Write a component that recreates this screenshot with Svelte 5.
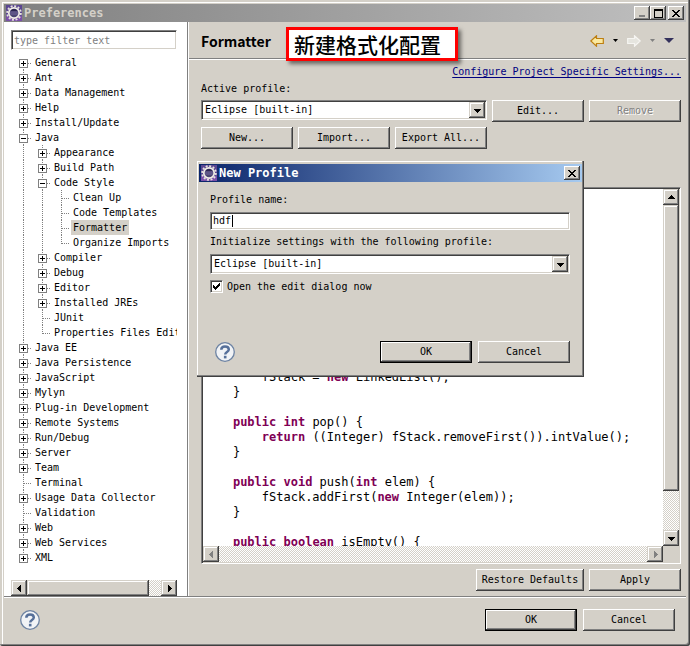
<script>
  const source = [
    ['General', 0, '+'], ['Ant', 0, '+'], ['Data Management', 0, '+'], ['Help', 0, '+'],
    ['Install/Update', 0, '+'], ['Java', 0, '-'],
    ['Appearance', 1, '+'], ['Build Path', 1, '+'], ['Code Style', 1, '-'],
    ['Clean Up', 2, ''], ['Code Templates', 2, ''], ['Formatter', 2, ''], ['Organize Imports', 2, ''],
    ['Compiler', 1, '+'], ['Debug', 1, '+'], ['Editor', 1, '+'], ['Installed JREs', 1, '+'],
    ['JUnit', 1, ''], ['Properties Files Editor', 1, ''],
    ['Java EE', 0, '+'], ['Java Persistence', 0, '+'], ['JavaScript', 0, '+'], ['Mylyn', 0, '+'],
    ['Plug-in Development', 0, '+'], ['Remote Systems', 0, '+'], ['Run/Debug', 0, '+'],
    ['Server', 0, '+'], ['Team', 0, '+'], ['Terminal', 0, ''], ['Usage Data Collector', 0, '+'],
    ['Validation', 0, ''], ['Web', 0, '+'], ['Web Services', 0, '+'], ['XML', 0, '+']
  ];

  // A guide line runs on below a row while a later sibling exists at that level.
  function continues(i, level) {
    for (let j = i + 1; j < source.length; j++) {
      if (source[j][1] < level) return false;
      if (source[j][1] === level) return true;
    }
    return false;
  }

  const rows = source.map(([label, depth, mark], i) => {
    const guides = [];
    for (let level = 0; level <= depth; level++) {
      const down = continues(i, level);
      if (level < depth && !down) continue;
      const top = level === 0 && i === 0 ? 8 : 0;
      guides.push({ x: 12.5 + level * 19, top, bottom: down ? 15 : 9 });
    }
    return { label, depth, mark, guides, cx: 12.5 + depth * 19, width: 22 + depth * 19 };
  });

  const code = [
    [['        fStack = '], ['new', 1], [' LinkedList();']],
    [['    }']],
    [[' ']],
    [['    '], ['public int', 1], [' pop() {']],
    [['        '], ['return', 1], [' ((Integer) fStack.removeFirst()).intValue();']],
    [['    }']],
    [[' ']],
    [['    '], ['public void', 1], [' push('], ['int', 1], [' elem) {']],
    [['        fStack.addFirst('], ['new', 1], [' Integer(elem));']],
    [['    }']],
    [[' ']],
    [['    '], ['public boolean', 1], [' isEmpty() {']]
  ];

  let selected = $state('Formatter');
  let name = $state('hdf');
  let openEdit = $state(true);
</script>

{#snippet gear()}
  <svg class="gear" width="16" height="16" viewBox="0 0 16 16" aria-hidden="true">
    <rect width="16" height="16" fill="#5b4691" />
    <rect y="11" width="16" height="5" fill="#7a4fa8" />
    <circle cx="8" cy="8" r="6.9" fill="none" stroke="#e6e3dc" stroke-width="1.8" stroke-dasharray="2 1.61" />
    <circle cx="8" cy="8" r="5.2" fill="#4a4470" stroke="#f2efe8" stroke-width="1.7" />
    <path d="M4 6.5a4.4 4.4 0 0 1 8 0z" fill="#2b2450" />
    <path d="M4 7h8M4 9h8" stroke="#75689f" />
  </svg>
{/snippet}

{#snippet arrow(dir)}
  <svg width="7" height="7" viewBox="0 0 7 7" aria-hidden="true" shape-rendering="crispEdges">
    {#if dir === 'down'}<path d="M0 2h7v1H6v1H5v1H4v1H3V5H2V4H1V3H0z" fill="currentColor" />
    {:else if dir === 'up'}<path d="M3 1h1v1h1v1h1v1h1v1H0V4h1V3h1V2h1z" fill="currentColor" />
    {:else if dir === 'left'}<path d="M5 0v7H4V6H3V5H2V4H1V3h1V2h1V1h1V0z" fill="currentColor" />
    {:else}<path d="M2 0v7h1V6h1V5h1V4h1V3H5V2H4V1H3V0z" fill="currentColor" />{/if}
  </svg>
{/snippet}

{#snippet cross()}
  <svg width="8" height="7" viewBox="0 0 8 7" aria-hidden="true" shape-rendering="crispEdges">
    <path d="M0 0h2v1h1v1h2V1h1V0h2v1H7v1H6v1H5v1h1v1h1v1h1v1H6V6H5V5H3v1H2v1H0V6h1V5h1V4h1V3H2V2H1V1H0z" />
  </svg>
{/snippet}

{#snippet help()}
  <button type="button" class="help" aria-label="Help">
    <svg width="20" height="20" viewBox="0 0 20 20" aria-hidden="true">
      <circle cx="10" cy="10" r="9.3" fill="#f1f3f6" stroke="#6d83a3" stroke-width="1.3" />
      <path d="M6.3 7.7C6.3 5.5 7.8 4.4 10 4.4s3.8 1.2 3.8 3.1c0 2.5-3.6 2.6-3.6 5" fill="none" stroke="#56709a" stroke-width="2.5" />
      <rect x="8.9" y="13.8" width="2.6" height="2.6" fill="#56709a" />
    </svg>
  </button>
{/snippet}

<div class="window">
  <header class="titlebar">
    {@render gear()}
    <h1>Preferences</h1>
    <div class="sys">
      <button aria-label="Minimize"><svg width="8" height="8" aria-hidden="true"><path d="M1 6h6v2H1z" fill="#808080" /></svg></button>
      <button aria-label="Maximize"><svg width="9" height="9" aria-hidden="true"><path d="M0 0h9v9H0zM1 2v6h7V2z" fill-rule="evenodd" /></svg></button>
      <button class="apart" aria-label="Close">{@render cross()}</button>
    </div>
  </header>

  <div class="body">
    <nav class="side">
      <input class="sunken filter" type="text" placeholder="type filter text" aria-label="Filter" />
      <ul class="tree">
        {#each rows as row}
          <li>
            <button class="row" onclick={() => (selected = row.label)}>
              <svg width={row.width} height="15" shape-rendering="crispEdges" aria-hidden="true">
                <g stroke="#808080" stroke-dasharray="1 1">
                  {#each row.guides as g}<path d="M{g.x} {g.top}V{g.bottom}" />{/each}
                  <path d="M{row.cx} 8.5H{row.width - 2}" />
                </g>
                {#if row.mark}
                  <rect x={row.cx - 4} y="4.5" width="8" height="8" fill="#fff" stroke="#808080" />
                  <path d="M{row.cx - 2.5} 8.5h5" stroke="#000" />
                  {#if row.mark === '+'}<path d="M{row.cx} 6v5" stroke="#000" />{/if}
                {/if}
              </svg>
              <span class:selected={row.label === selected}>{row.label}</span>
            </button>
          </li>
        {/each}
      </ul>
      <div class="scroll">
        <button aria-label="Scroll left">{@render arrow('left')}</button>
        <div class="thumb"></div>
        <div class="rest"></div>
        <button aria-label="Scroll right">{@render arrow('right')}</button>
      </div>
    </nav>

    <main>
      <div class="head">
        <h2>Formatter</h2>
        <div class="history">
          <button aria-label="Back">
            <svg width="14" height="12" viewBox="0 0 14 12" aria-hidden="true"><path d="M.8 6 6.5.8v2.7h6.8v5H6.5v2.7z" fill="#fbe9a0" stroke="#bd7f12" stroke-width="1.2" /></svg>
          </button>
          <button aria-label="Back history"><svg width="5" height="3" aria-hidden="true"><path d="M0 0h5L2.5 3z" /></svg></button>
          <button aria-label="Forward" disabled>
            <svg width="14" height="12" viewBox="0 0 14 12" aria-hidden="true"><path d="M13.2 6 7.5.8v2.7H.7v5h6.8v2.7z" fill="#e6e5df" stroke="#f6f5f2" stroke-width="1.2" /></svg>
          </button>
          <button aria-label="Forward history" disabled><svg width="5" height="3" aria-hidden="true"><path d="M0 0h5L2.5 3z" fill="#808080" /></svg></button>
          <button aria-label="Menu"><svg width="10" height="5" aria-hidden="true"><path d="M0 0h10L5 5z" fill="#34315c" /></svg></button>
        </div>
      </div>

      <div class="content">
        <a href="#project">Configure Project Specific Settings...</a>
        <label for="active">Active profile:</label>
        <div class="grid">
          <div class="combo sunken wide">
            <select id="active"><option>Eclipse [built-in]</option></select>
            <i>{@render arrow('down')}</i>
          </div>
          <button class="btn">Edit...</button>
          <button class="btn" disabled>Remove</button>
          <button class="btn">New...</button>
          <button class="btn">Import...</button>
          <button class="btn">Export All...</button>
        </div>

        <div class="viewer sunken">
          <div class="lines">
            {#each code as line}
              <code>{#each line as [text, keyword]}{#if keyword}<b>{text}</b>{:else}{text}{/if}{/each}</code>
            {/each}
          </div>
          <div class="scroll vertical">
            <button aria-label="Scroll up">{@render arrow('up')}</button>
            <div class="thumb"></div>
            <div class="rest"></div>
            <button aria-label="Scroll down">{@render arrow('down')}</button>
          </div>
          <div class="scroll">
            <button disabled aria-label="Scroll code left">{@render arrow('left')}</button>
            <div class="rest"></div>
            <button disabled aria-label="Scroll code right">{@render arrow('right')}</button>
          </div>
        </div>

        <div class="grid actions">
          <button class="btn restore">Restore Defaults</button>
          <button class="btn apply">Apply</button>
        </div>
      </div>
    </main>
  </div>

  <footer>
    {@render help()}
    <div class="pair">
      <button class="btn default">OK</button>
      <button class="btn">Cancel</button>
    </div>
  </footer>

  <div class="note">新建格式化配置</div>

  <div class="dialog" role="dialog" aria-labelledby="dialog-title">
    <header class="titlebar active">
      {@render gear()}
      <h1 id="dialog-title">New Profile</h1>
      <div class="sys"><button aria-label="Close dialog">{@render cross()}</button></div>
    </header>
    <form onsubmit={(e) => e.preventDefault()}>
      <label for="name">Profile name:</label>
      <div class="sunken namebox">
        <input id="name" type="text" size="3" bind:value={name} />
        <span class="caret"></span>
      </div>
      <label for="base">Initialize settings with the following profile:</label>
      <div class="combo sunken">
        <select id="base"><option>Eclipse [built-in]</option></select>
        <i>{@render arrow('down')}</i>
      </div>
      <label class="check">
        <input class="sunken" type="checkbox" bind:checked={openEdit} />
        {#if openEdit}
          <svg width="7" height="7" aria-hidden="true" shape-rendering="crispEdges"><path d="M0 2h1v1h1v1h1V3h1V2h1V1h1V0h1v3H6v1H5v1H4v1H3v1H2V6H1V5H0z" /></svg>
        {/if}
        <span>Open the edit dialog now</span>
      </label>
      <div class="foot">
        {@render help()}
        <div class="pair">
          <button class="btn default">OK</button>
          <button class="btn" type="button">Cancel</button>
        </div>
      </div>
    </form>
  </div>
</div>

<style>
  :global(body) {
    margin: 0;
    background: #d4d0c8;
  }
  .window, .window * {
    box-sizing: border-box;
  }
  .window {
    position: relative;
    display: flex;
    flex-direction: column;
    height: 100vh;
    min-height: 640px;
    padding: 4px;
    background: #d4d0c8;
    border-radius: 0 0 3px 3px;
    box-shadow: inset -1px -1px #404040, inset -2px -2px #808080, inset 2px 2px #d4d0c8, inset 3px 3px #fff;
    font: 10px/12px "DejaVu Sans Mono", "Liberation Mono", monospace;
    color: #000;
  }
  button, input, select {
    margin: 0;
    padding: 0;
    border: 0;
    border-radius: 0;
    outline: 0;
    background: none;
    font: inherit;
    color: inherit;
    appearance: none;
  }
  svg {
    display: block;
    flex: none;
  }
  h1, h2 {
    margin: 0;
  }
  .sunken {
    background: #fff;
    border: 1px solid;
    border-color: #808080 #fff #fff #808080;
    box-shadow: inset 1px 1px #404040, inset -1px -1px #d4d0c8;
  }
  .titlebar {
    display: flex;
    flex: none;
    align-items: center;
    height: 18px;
    padding: 0 2px;
    background: linear-gradient(90deg, #808080, #c0c0c0);
    color: #d4d0c8;
  }
  .titlebar.active {
    background: linear-gradient(90deg, #0a246a, #a6caf0);
    color: #fff;
  }
  .titlebar h1 {
    flex: 1;
    padding-left: 2px;
    font-size: 12px;
    line-height: 18px;
  }
  .sys {
    display: flex;
  }
  .sys button {
    display: grid;
    place-items: center;
    width: 16px;
    height: 14px;
    background: #d4d0c8;
    box-shadow: inset -1px -1px #404040, inset 1px 1px #fff, inset -2px -2px #808080;
    color: #000;
  }
  .sys .apart {
    margin-left: 2px;
  }
  .body {
    display: flex;
    flex: 1;
    min-height: 0;
  }
  .side {
    display: flex;
    flex-direction: column;
    width: 184px;
    padding: 8px 10px 0 7px;
    background: #fff;
    border-right: 1px solid #808080;
  }
  .filter {
    flex: none;
    width: 100%;
    height: 20px;
    padding: 0 2px;
  }
  .filter::placeholder {
    color: #808080;
    opacity: 1;
  }
  .tree {
    flex: 1;
    margin: 5px 0 0;
    padding: 0;
    overflow: hidden;
    list-style: none;
  }
  .row {
    display: flex;
    height: 15px;
    line-height: 15px;
    white-space: nowrap;
  }
  .row span {
    padding: 0 2px;
  }
  .row .selected {
    background: #d4d0c8;
  }
  .scroll {
    display: flex;
    flex: none;
    height: 16px;
    background: repeating-conic-gradient(#fff 0 25%, #d4d0c8 0 50%) 0 0 / 2px 2px;
  }
  .scroll button, .thumb, .combo i {
    display: grid;
    place-items: center;
    flex: none;
    width: 16px;
    height: 16px;
    background: #d4d0c8;
    box-shadow: inset -1px -1px #404040, inset 1px 1px #d4d0c8, inset -2px -2px #808080, inset 2px 2px #fff;
  }
  .scroll button:disabled {
    color: #808080;
  }
  .scroll .thumb {
    flex: 10;
    width: auto;
  }
  .rest {
    flex: 1;
  }
  .vertical {
    flex-direction: column;
    width: 16px;
    height: auto;
  }
  .vertical .thumb {
    flex: 22;
    width: 16px;
    height: auto;
  }
  .vertical .rest {
    flex: 3;
  }
  main {
    display: flex;
    flex: 1;
    flex-direction: column;
    min-width: 0;
    border-left: 1px solid #fff;
  }
  .head {
    display: flex;
    justify-content: space-between;
    align-items: center;
    height: 38px;
    padding: 0 12px;
    border-bottom: 1px solid #fff;
    box-shadow: inset 0 -1px #808080;
  }
  .head h2 {
    font: bold 14px/20px "Noto Sans CJK SC", sans-serif;
  }
  .history {
    display: flex;
    align-items: center;
    gap: 9px;
  }
  .content {
    display: flex;
    flex: 1;
    flex-direction: column;
    min-height: 0;
    padding: 6px 5px 5px 12px;
  }
  .content a {
    align-self: flex-end;
    color: #000080;
    text-underline-offset: 2px;
  }
  .content > label {
    padding: 5px 0;
  }
  .grid {
    display: grid;
    flex: none;
    grid-template-columns: repeat(5, 1fr);
    gap: 5px;
  }
  .wide {
    grid-column: span 3;
  }
  .combo {
    display: flex;
    align-items: center;
    height: 20px;
    padding: 0 1px;
  }
  .grid .combo {
    align-self: start;
  }
  .combo select {
    flex: 1;
    min-width: 0;
    height: 16px;
    padding: 0 2px;
  }
  .combo i {
    pointer-events: none;
  }
  .btn {
    min-width: 92px;
    height: 22px;
    background: #d4d0c8;
    box-shadow: inset -1px -1px #404040, inset 1px 1px #fff, inset -2px -2px #808080;
    white-space: nowrap;
  }
  .btn:disabled {
    color: #808080;
    text-shadow: 1px 1px #fff;
  }
  .default {
    border: 1px solid #000;
  }
  .viewer {
    display: grid;
    flex: 1;
    grid-template: minmax(0, 1fr) 16px / minmax(0, 1fr) 16px;
    min-height: 0;
    margin: 38px 0 5px;
    padding: 1px;
    background: #d4d0c8;
  }
  .lines {
    padding: 181px 0 0 1px;
    overflow: hidden;
    background: #fff;
  }
  code {
    display: block;
    font: 12px/15px "DejaVu Sans Mono", monospace;
    white-space: pre;
  }
  code b {
    color: #7f0055;
  }
  .restore {
    grid-column: 3 / span 2;
    justify-self: end;
    width: 108px;
  }
  footer {
    display: flex;
    flex: none;
    justify-content: space-between;
    align-items: center;
    height: 46px;
    padding: 0 11px 0 16px;
    border-top: 1px solid #808080;
    box-shadow: inset 0 1px #fff;
  }
  .pair {
    display: flex;
    gap: 6px;
  }
  .note {
    position: absolute;
    top: 27px;
    left: 286px;
    width: 172px;
    height: 34px;
    padding: 0 5px;
    border: 3px solid #f00;
    background: #fff;
    box-shadow: 3px 3px 4px rgba(0, 0, 0, 0.5);
    font: 500 21px/29px "Noto Sans CJK SC", sans-serif;
    white-space: nowrap;
  }
  .dialog {
    position: absolute;
    top: 161px;
    left: 197px;
    width: 387px;
    padding: 3px 2px;
    background: #d4d0c8;
    box-shadow: inset -1px -1px #404040, inset -2px -2px #808080, inset 1px 1px #fff;
  }
  form {
    display: flex;
    flex-direction: column;
    padding: 12px 12px 11px 11px;
  }
  .namebox {
    display: flex;
    align-items: center;
    height: 18px;
    margin: 6px 0;
    padding: 0 2px;
  }
  .namebox input {
    width: 19px;
  }
  .caret {
    width: 1px;
    height: 12px;
    background: #000;
  }
  form .combo {
    margin: 6px 0;
  }
  .check {
    display: grid;
    grid-template-columns: 13px 1fr;
    align-items: center;
    gap: 4px;
  }
  .check input {
    grid-area: 1 / 1;
    width: 13px;
    height: 13px;
  }
  .check svg {
    z-index: 1;
    grid-area: 1 / 1;
    justify-self: center;
    pointer-events: none;
  }
  .check span {
    grid-area: 1 / 2;
  }
  .foot {
    display: flex;
    justify-content: space-between;
    align-items: center;
    margin-top: 48px;
    padding-left: 5px;
  }
</style>
